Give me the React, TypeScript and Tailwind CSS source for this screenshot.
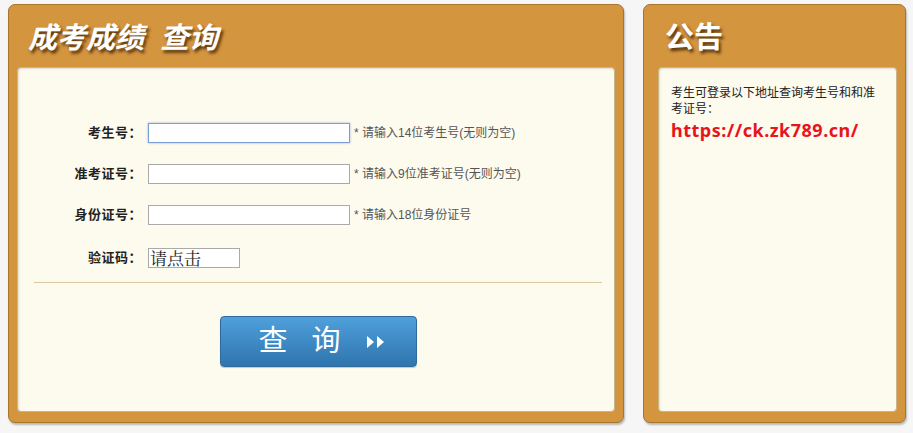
import { useState } from "react";

const fields = [
  { label: "考生号：", hint: "* 请输入14位考生号(无则为空)", focus: true },
  { label: "准考证号：", hint: "* 请输入9位准考证号(无则为空)", focus: false },
  { label: "身份证号：", hint: "* 请输入18位身份证号", focus: false },
];

export default function App() {
  const [values, setValues] = useState<string[]>(["", "", ""]);

  return (
    <div
      className="flex min-h-[433px] w-[913px] gap-[19px] bg-[#f6f6f6] pl-[8px] pt-[4px] text-[#222]"
      style={{ fontFamily: '"Liberation Sans", "Noto Sans CJK SC", sans-serif' }}
    >
      <section className="flex h-[419px] w-[616px] flex-col rounded-[7px] border border-[#a9742c] bg-[#d4953f] shadow-[1px_2px_2px_rgba(0,0,0,0.25)]">
        <div className="flex h-[62px] items-center pl-[19px] pt-[4px]">
          <h1 className="text-[29px] font-bold italic leading-none text-white [text-shadow:2px_3px_3px_rgba(60,30,0,0.8)]">
            成考成绩&nbsp;&nbsp;查询
          </h1>
        </div>

        <div className="mx-[8px] mb-[10px] flex-1 rounded-[4px] border border-[#c9b58c] bg-[#fdfaee] shadow-[inset_1px_1px_2px_rgba(0,0,0,0.12)]">
          <div className="flex flex-col gap-[21px] pt-[55px]">
            {fields.map((field, index) => (
              <div key={field.label} className="flex h-[20px] items-center">
                <label className="w-[124px] text-right text-[13px] font-bold tracking-[0.5px] text-[#222]">
                  {field.label}
                </label>
                <input
                  value={values[index]}
                  onChange={(e) => {
                    const next = [...values];
                    next[index] = e.target.value;
                    setValues(next);
                  }}
                  className={`ml-[6px] h-[20px] w-[202px] bg-white outline-none ${
                    field.focus
                      ? "border border-[#7a9fd6] shadow-[0_0_2px_rgba(80,130,210,0.6)]"
                      : "border border-[#aaa]"
                  }`}
                />
                <span className="ml-[4px] text-[12px] text-[#555]">
                  {field.hint}
                </span>
              </div>
            ))}

            <div className="mt-[2px] flex h-[20px] items-center">
              <label className="w-[124px] text-right text-[13px] font-bold tracking-[0.5px] text-[#222]">
                验证码：
              </label>
              <div
                className="ml-[6px] flex h-[20px] w-[92px] items-center border border-[#aaa] bg-white pb-[2px] pl-[1px] text-[17px] leading-none text-[#222]"
                style={{ fontFamily: '"Noto Serif CJK SC", "Liberation Serif", "Noto Sans CJK SC", serif' }}
              >
                请点击
              </div>
            </div>
          </div>

          <div className="ml-[16px] mr-[12px] mt-[14px] h-px bg-[#d8c9a0]" />

          <div className="pl-[202px] pt-[33px]">
            <button className="flex h-[51px] w-[197px] items-center justify-center gap-[24px] rounded-[4px] border border-[#2e6a9c] bg-gradient-to-b from-[#4fa0dc] to-[#2f75ae] pl-[8px] text-[29px] text-white shadow-[0_1px_1px_rgba(0,0,0,0.2)]">
              <span>查</span>
              <span>询</span>
              <svg width="22" height="16" viewBox="0 0 22 16">
                <path d="M2 2 L9 8 L2 14 Z" fill="white" />
                <path d="M12 2 L19 8 L12 14 Z" fill="white" />
              </svg>
            </button>
          </div>
        </div>
      </section>

      <section className="flex h-[419px] w-[263px] flex-col rounded-[7px] border border-[#a9742c] bg-[#d4953f] shadow-[1px_2px_2px_rgba(0,0,0,0.25)]">
        <div className="flex h-[62px] items-center pl-[21px] pt-[4px]">
          <h2 className="text-[29px] font-bold leading-none text-white [text-shadow:2px_3px_3px_rgba(60,30,0,0.8)]">
            公告
          </h2>
        </div>

        <div className="mb-[10px] ml-[14px] mr-[8px] flex-1 rounded-[4px] border border-[#c9b58c] bg-[#fdfaee] px-[12px] pt-[17px] shadow-[inset_1px_1px_2px_rgba(0,0,0,0.12)]">
          <p className="text-[12px] leading-[16px] text-[#222]">
            考生可登录以下地址查询考生号和和准考证号：
          </p>
          <a
            className="block text-[18px] font-bold leading-[26px] tracking-[0.5px] text-[#e8141b]"
            style={{ fontFamily: '"Noto Sans", "Liberation Sans", sans-serif' }}
          >
            https://ck.zk789.cn/
          </a>
        </div>
      </section>
    </div>
  );
}
